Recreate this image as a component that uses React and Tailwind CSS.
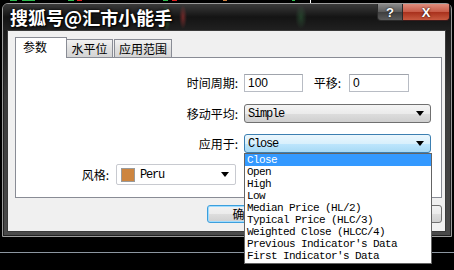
const cjk = { fontFamily: '"Noto Sans CJK SC", "Liberation Sans", sans-serif' };
const mono = { fontFamily: '"Liberation Mono", "DejaVu Sans Mono", monospace' };

const Arrow = () => (
  <svg width="8" height="5" viewBox="0 0 8 5" className="shrink-0">
    <path d="M0 0h8L4 5z" fill="#000" />
  </svg>
);

const applyOptions = [
  "Close",
  "Open",
  "High",
  "Low",
  "Median Price (HL/2)",
  "Typical Price (HLC/3)",
  "Weighted Close (HLCC/4)",
  "Previous Indicator's Data",
  "First Indicator's Data",
];

const Label = ({ children, className }) => (
  <div className={"text-right text-[12px] leading-none text-black " + className} style={cjk}>
    {children}
  </div>
);

const btn = "w-[75px] h-[18px] rounded-[3px] bg-[linear-gradient(180deg,#f2f2f2,#ebebeb_50%,#dddddd_51%,#cfcfcf)] flex items-center justify-center text-[12px] leading-none text-black";

const App = () => {
  return (
    <main className="relative w-[454px] h-[270px] bg-black overflow-hidden">
      {/* chart bits peeking above the window */}
      <div className="flex h-[3px] items-start">
        <div className="ml-[10px] w-[7px] h-[1px] bg-[#2fbf4f]" />
        <div className="ml-[5px] w-[13px] h-[1px] bg-[#2fbf4f]" />
        <div className="ml-[33px] w-[6px] h-[1px] bg-[#2fbf4f]" />
        <div className="ml-[3px] w-[5px] h-[1px] bg-[#e02020]" />
        <div className="ml-[81px] w-[5px] h-[1px] bg-[#2fbf4f]" />
        <div className="ml-[4px] w-[5px] h-[1px] bg-[#e02020]" />
        <div className="ml-[46px] w-[4px] h-[1px] bg-[#d08040]" />
        <div className="ml-[65px] w-[3px] h-[1px] bg-[#2fbf4f]" />
        <div className="ml-[15px] w-[1px] h-[3px] bg-white" />
      </div>

      {/* dialog window */}
      <div className="ml-[2px] w-[450px] h-[234px] flex flex-col rounded-t-[6px] border border-[#9c9c9c] bg-[linear-gradient(180deg,#2a2a2a_0%,#1a1a1a_12%,#3a3a3a_40%,#4a4a4a_100%)] shadow-[inset_0_0_0_1px_#222]">
        <div className="h-[26px] flex items-start justify-between rounded-t-[5px] bg-[radial-gradient(ellipse_5px_13px_at_163px_14px,rgba(70,180,90,0.55),transparent),radial-gradient(ellipse_4px_12px_at_180px_13px,rgba(200,60,60,0.5),transparent),radial-gradient(ellipse_6px_12px_at_298px_13px,rgba(70,160,90,0.3),transparent),linear-gradient(180deg,#3a3a3a,#141414_50%,#202020)]">
          <span
            className="ml-[7px] mt-[3px] text-[18px] leading-[21px] font-bold text-white [text-shadow:0_0_3px_#000,1px_1px_2px_#000]"
            style={cjk}
          >
            搜狐号@汇市小能手
          </span>
          <div className="flex mr-[1px]">
            <div className="w-[26px] h-[17px] flex items-center justify-center rounded-bl-[4px] border border-t-0 border-[#2a2a2a] bg-[linear-gradient(180deg,#8a8a8a,#5a5a5a_50%,#3e3e3e_51%,#5c5c5c)] text-white text-[13px] font-bold leading-none [text-shadow:0_0_2px_#000]" style={{ fontFamily: '"Liberation Sans", sans-serif' }}>
              ?
            </div>
            <div className="w-[47px] h-[17px] flex items-center justify-center rounded-br-[4px] border border-t-0 border-l-0 border-[#3a1a1a] bg-[linear-gradient(180deg,#e08c7c,#c75a46_50%,#a8301c_51%,#c85a40)] text-white text-[13px] font-bold leading-none [text-shadow:0_0_2px_#000]" style={{ fontFamily: '"Liberation Sans", sans-serif' }}>
              X
            </div>
          </div>
        </div>

        {/* client area */}
        <div className="ml-[4px] w-[439px] h-[202px] border border-[#3a3a3a] bg-[#f0f0f0] pt-[6px] pl-[7px]">
          {/* tabs */}
          <div className="flex items-end h-[20px]">
            <div className="relative z-10 w-[52px] h-[21px] -mb-[1px] border border-b-0 border-[#898c95] bg-white pl-[7px] pt-[3px] text-[12px] leading-none text-black" style={cjk}>
              参数
            </div>
            <div className="w-[46px] h-[18px] border border-b-0 border-l-0 border-[#898c95] bg-[linear-gradient(180deg,#f2f2f2,#e0e0e0_50%,#d4d4d4)] text-center pt-[3px] text-[12px] leading-none text-black" style={cjk}>
              水平位
            </div>
            <div className="ml-[1px] w-[58px] h-[18px] border border-b-0 border-[#898c95] bg-[linear-gradient(180deg,#f2f2f2,#e0e0e0_50%,#d4d4d4)] text-center pt-[3px] text-[12px] leading-none text-black" style={cjk}>
              应用范围
            </div>
          </div>

          {/* tab panel */}
          <div className="w-[427px] h-[141px] border border-[#898c95] bg-white flex flex-col">
            <div className="mt-[16px] flex items-center h-[18px]">
              <Label className="w-[222px]">时间周期:</Label>
              <div className="ml-[6px] w-[59px] h-[18px] border border-[#b8bcc4] border-t-[#a0a4ac] bg-white pl-[3px] text-[12px] leading-[16px] text-black" style={{ fontFamily: '"Liberation Sans", sans-serif' }}>
                100
              </div>
              <Label className="w-[38px]">平移:</Label>
              <div className="ml-[8px] w-[60px] h-[18px] border border-[#b8bcc4] border-t-[#a0a4ac] bg-white pl-[3px] text-[12px] leading-[16px] text-black" style={{ fontFamily: '"Liberation Sans", sans-serif' }}>
                0
              </div>
            </div>

            <div className="mt-[12px] flex items-center h-[19px]">
              <Label className="w-[222px]">移动平均:</Label>
              <div className="ml-[6px] w-[187px] h-[19px] flex items-center justify-between rounded-[3px] border border-[#707070] bg-[linear-gradient(180deg,#f4f4f4,#ebebeb_50%,#dddddd_51%,#cfcfcf)] pl-[3px] pr-[6px] text-[12px] tracking-[-1.2px] text-black" style={mono}>
                <span>Simple</span>
                <Arrow />
              </div>
            </div>

            <div className="mt-[11px] flex items-center h-[19px]">
              <Label className="w-[222px]">应用于:</Label>
              <div className="ml-[6px] w-[187px] h-[19px] flex items-center justify-between rounded-[3px] border border-[#3c7fb1] bg-[linear-gradient(180deg,#eaf6fd,#d9f0fc_50%,#bee6fd_51%,#a7d9f5)] pl-[3px] pr-[6px] text-[12px] tracking-[-1.2px] text-black" style={mono}>
                <span>Close</span>
                <Arrow />
              </div>
            </div>

            <div className="mt-[11px] flex items-center h-[21px]">
              <Label className="w-[93px]">风格:</Label>
              <div className="ml-[7px] w-[120px] h-[21px] flex items-center rounded-[2px] border border-[#c8cad0] bg-white pl-[4px] pr-[6px] text-[12px] tracking-[-1.2px] text-black" style={mono}>
                <div className="w-[14px] h-[14px] border border-[#9a9a9a] bg-[#cd853f]" />
                <span className="ml-[5px] flex-1">Peru</span>
                <Arrow />
              </div>
            </div>
          </div>

          {/* buttons (mostly hidden under the open list) */}
          <div className="mt-[7px] ml-[192px] flex gap-[5px]">
            <div className={btn + " border border-[#3c9fdc] shadow-[inset_0_0_0_1px_#9fdcff]"} style={cjk}>
              确定
            </div>
            <div className={btn + " border border-[#707070]"} />
            <div className={btn + " border border-[#707070]"} />
          </div>
        </div>
      </div>

      <div className="mt-[15px] h-[1px] bg-[#8c96a0]" />

      {/* open dropdown list */}
      <div className="absolute left-[244px] top-[153px] w-[188px] h-[111px] border border-[#646464] bg-white text-[11px] tracking-[-0.6px] text-black" style={mono}>
        {applyOptions.map((o, i) => (
          <div
            key={o}
            className={
              "h-[12px] leading-[12px] pl-[2px] whitespace-pre " +
              (i === 0 ? "bg-[#3399ff] text-white" : "")
            }
          >
            {o}
          </div>
        ))}
      </div>
    </main>
  );
};

export default App;
